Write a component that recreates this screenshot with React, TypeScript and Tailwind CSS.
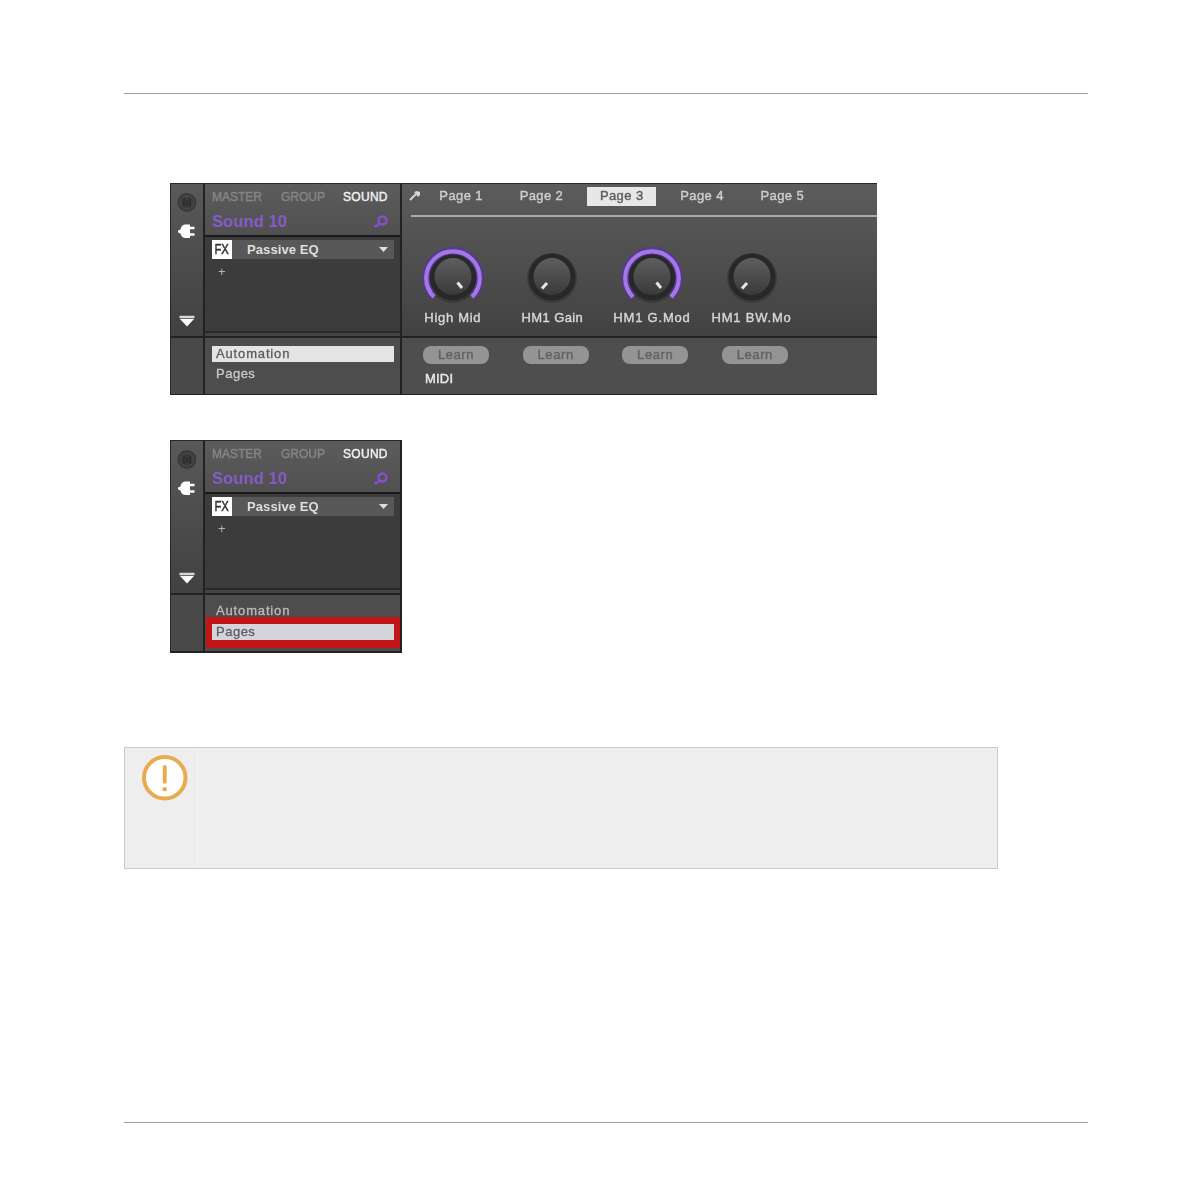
import clsx from "clsx";

const tabs = ["Page 1", "Page 2", "Page 3", "Page 4", "Page 5"];

const knobs = [
  { label: "High Mid", on: true, tracking: "tracking-[0.7px]" },
  { label: "HM1 Gain", on: false, tracking: "tracking-[0.4px]" },
  { label: "HM1 G.Mod", on: true, tracking: "tracking-[0.8px]" },
  { label: "HM1 BW.Mo", on: false, tracking: "tracking-[0.8px]" },
];

function Knob({ on }: { on: boolean }) {
  return (
    <svg width="72" height="64" viewBox="-36 -32 72 64" className="block overflow-visible">
      <defs>
        <linearGradient id="cap" x1="0" y1="0" x2="0" y2="1">
          <stop offset="0" stopColor="#5e5e5e" />
          <stop offset="1" stopColor="#3a3a3a" />
        </linearGradient>
      </defs>
      <circle cy="1" r="25" fill="#2a2a2a" opacity="0.45" />
      <circle r="23.5" fill="#292828" />
      {on && (
        <>
          <path d="M-19 20A27 27 0 1 1 19 20" fill="none" stroke="#5b32a0" strokeWidth="7.5" opacity="0.75" />
          <path d="M-19 20A26.8 26.8 0 1 1 19 20" fill="none" stroke="#a377e6" strokeWidth="4.2" />
        </>
      )}
      <circle cy="-0.5" r="18.5" fill="url(#cap)" />
      {on ? (
        <path d="M4.5 5.5L9 11" stroke="#e6e6e6" strokeWidth="3" />
      ) : (
        <path d="M-5 6L-10 11.5" stroke="#e6e6e6" strokeWidth="3" />
      )}
    </svg>
  );
}

function Rail() {
  return (
    <div className="flex w-8 shrink-0 flex-col bg-gradient-to-b from-[#595959] to-[#414141]">
      <svg width="32" height="152" viewBox="0 0 32 152">
        {/* channel */}
        <circle cx="16" cy="18.5" r="9.5" fill="#3b3b3b" />
        <circle cx="16" cy="18.5" r="6.5" fill="none" stroke="#474747" strokeWidth="1.3" />
        <path d="M13 14.5v8M16 16.5v5M19 14.5v8" stroke="#2a2a2a" strokeWidth="1.5" />
        {/* plug-in */}
        <path d="M19 40.5v13.5h-4c-3.5 0-5-2-5.5-4.5L7 48.5v-2l2.5-1c.5-3 2-5 5.500-5z" fill="#fff" />
        <path d="M18 44h5.500M18 50.500h5.500" stroke="#fff" strokeWidth="2.600" />
        {/* collapse */}
        <path d="M8.500 133h15" stroke="#d8d8d8" strokeWidth="2.500" />
        <path d="M9 135h14l-7 7.500z" fill="#fff" />
      </svg>
    </div>
  );
}

function Browser() {
  return (
    <div className="flex w-[195px] shrink-0 flex-col">
      <div className="h-[51px] bg-gradient-to-b from-[#5c5c5c] to-[#505050]">
        <div className="flex h-[25px] items-center pl-[7px] text-[12px] [-webkit-text-stroke:0.4px]">
          <span className="w-[69px] text-[#858585]">MASTER</span>
          <span className="w-[62px] text-[#858585]">GROUP</span>
          <span className="tracking-[0.3px] text-[#f3f3f3]">SOUND</span>
        </div>
        <div className="flex h-[27px] items-center justify-between pr-3 pb-0.5 pl-[7px]">
          <span className="text-[16.5px] font-bold tracking-[0.1px] text-[#855bc9]">Sound 10</span>
          <svg width="15" height="13" viewBox="0 0 15 13" fill="none" stroke="#8151cf">
            <circle cx="9.5" cy="5.5" r="4" strokeWidth="2.4" />
            <path d="M6.500 8.500L4 11H1" strokeWidth="2.4" />
          </svg>
        </div>
      </div>
      <div className="flex h-[96px] flex-col border-t-2 border-[#191919] bg-[#3c3c3c] pt-[3px] pl-[7px]">
        <div className="flex h-[19px] w-[182px]">
          <span className="flex w-5 shrink-0 items-center justify-center bg-white">
            <span className="scale-x-75 text-[15px] text-[#333] [-webkit-text-stroke:0.5px]">FX</span>
          </span>
          <div className="flex grow items-center justify-between bg-[#585858] pr-1.5 pl-[15px]">
            <span className="text-[13px] font-bold tracking-[0.1px] text-[#dedede]">Passive EQ</span>
            <svg width="9" height="5" viewBox="0 0 9 5">
              <path d="M0 0h9L4.5 5z" fill="#dedede" />
            </svg>
          </div>
        </div>
        <span className="mt-[5px] ml-[6px] text-[13px] leading-[15px] text-[#b5b5b5]">+</span>
      </div>
      <div className="h-[5px] border-t-2 border-[#292929] bg-[#444]" />
    </div>
  );
}

function Views({ pagesActive }: { pagesActive?: boolean }) {
  return (
    <div className="w-[195px] shrink-0 bg-[#4d4d4d] text-[13px] [-webkit-text-stroke:0.3px]">
      {pagesActive ? (
        <>
          <div className="flex h-[22px] items-end pl-[11px] tracking-[0.85px] text-[#bcbcbc]">
            <span className="-mb-px leading-[14px]">Automation</span>
          </div>
          <div className="ml-px flex h-[31px] w-[194px] items-center border-[6px] border-t-[7px] border-b-[8px] border-[#c2151a] bg-[#d5d4da] pl-1 leading-4 tracking-[0.5px] text-[#5d5d64]">
            Pages
          </div>
        </>
      ) : (
        <>
          <div className="mt-2 ml-[7px] flex h-4 w-[182px] items-center bg-[#e4e4e4] pl-1 tracking-[0.85px] text-[#5b5b5b]">
            Automation
          </div>
          <div className="mt-[3px] flex h-[17px] items-center pl-[11px] tracking-[0.5px] text-[#cacaca]">Pages</div>
        </>
      )}
    </div>
  );
}

function PluginPanel({ compact }: { compact?: boolean }) {
  return (
    <div
      className={clsx(
        "ml-[46px] overflow-hidden border-t border-l border-[#292929] bg-[#222]",
        compact ? "h-[213px] w-[232px]" : "h-[212px] w-[707px]"
      )}
    >
      <div className="flex h-[152px] gap-[2px] blur-[0.7px]">
        <Rail />
        <Browser />
        {!compact && (
          <div className="-mr-1 flex grow flex-col bg-gradient-to-b from-[#5c5c5c] to-[#424242]">
            <div className="flex h-[31px] items-center pb-[7px]">
              <svg width="12" height="12" viewBox="0 0 12 12" className="ml-[7px]">
                <path d="M1 10L7 4" stroke="#d5d5d5" strokeWidth="2" />
                <path d="M5 2l3-1 3 1v3L9 7z" fill="#d5d5d5" />
              </svg>
              <div className="flex">
                {tabs.map((tab) => (
                  <div key={tab} className="flex w-[80.3px] justify-center">
                    <span
                      className={clsx(
                        "flex h-[19px] w-[69px] items-center justify-center text-[13px] tracking-[0.4px] [-webkit-text-stroke:0.4px]",
                        tab === "Page 3" ? "bg-[#e7e7e7] text-[#5e5e5e]" : "text-[#cdcdcd]"
                      )}
                    >
                      {tab}
                    </span>
                  </div>
                ))}
              </div>
            </div>
            <div className="ml-[9px] h-[2px] bg-[#aaa]" />
            <div className="flex pt-7 pl-px">
              {knobs.map((knob) => (
                <div key={knob.label} className="flex w-[99.6px] shrink-0 flex-col items-center">
                  <Knob on={knob.on} />
                  <span
                    className={clsx(
                      "mt-[1px] text-[13px] leading-4 whitespace-nowrap text-[#d6d6d6] [-webkit-text-stroke:0.4px]",
                      knob.tracking
                    )}
                  >
                    {knob.label}
                  </span>
                </div>
              ))}
            </div>
          </div>
        )}
      </div>
      <div className="mt-[2px] flex h-[56px] gap-[2px] blur-[0.7px]">
        <div className="w-8 shrink-0 bg-[#494949]" />
        <Views pagesActive={compact} />
        {!compact && (
          <div className="-mr-1 grow bg-[#4e4e4e] pt-2 [-webkit-text-stroke:0.4px]">
            <div className="flex pl-[21px]">
              {knobs.map((knob) => (
                <div key={knob.label} className="w-[99.6px] shrink-0">
                  <div className="flex h-[18px] w-[66px] items-center justify-center rounded-lg bg-[#949494] text-[13px] tracking-[0.6px] text-[#626262]">
                    Learn
                  </div>
                </div>
              ))}
            </div>
            <div className="mt-[6px] pl-[23px] text-[13px] leading-[18px] tracking-[0.2px] text-[#eaeaea]">MIDI</div>
          </div>
        )}
      </div>
    </div>
  );
}

export default function App() {
  return (
    <div className="flex h-[1191px] w-[1191px] flex-col bg-white pt-[93px] pl-[124px] font-['Liberation_Sans',sans-serif]">
      <div className="h-px w-[964px] bg-[#9c9c9c]" />
      <div className="mt-[89px]">
        <PluginPanel />
      </div>
      <div className="mt-[45px]">
        <PluginPanel compact />
      </div>
      <div className="mt-[94px] flex h-[122px] w-[874px] border border-[#cbcbcb] bg-[#eee]">
        <div className="w-[73px] border-r border-[#f5f5f5] pt-[7px] pl-[17px]">
          <svg width="45.5" height="45.5" viewBox="0 0 46 46">
            <circle cx="23" cy="23" r="21" fill="#fff" stroke="#e8ab50" strokeWidth="4" />
            <path d="M23 12v15" stroke="#e8ab50" strokeWidth="4" strokeLinecap="round" />
            <circle cx="23" cy="34.5" r="2.2" fill="#e8ab50" />
          </svg>
        </div>
      </div>
      <div className="mt-[253px] h-px w-[964px] bg-[#9c9c9c]" />
    </div>
  );
}
